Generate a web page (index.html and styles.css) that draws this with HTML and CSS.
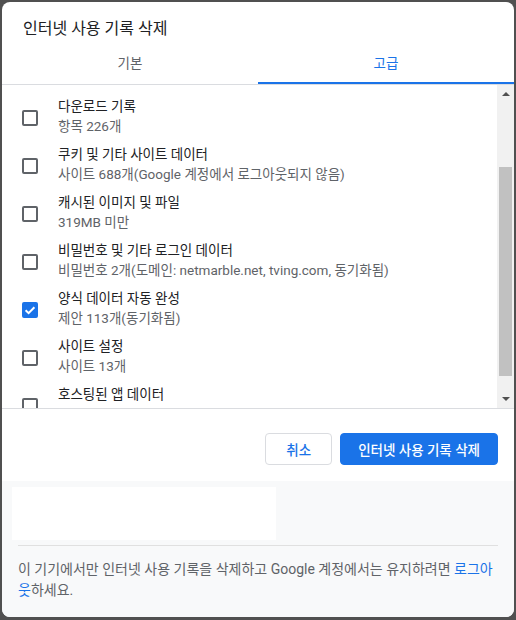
FILE: index.html
```html
<!DOCTYPE html>
<html lang="ko">
<head>
<meta charset="utf-8">
<title>인터넷 사용 기록 삭제</title>
<link rel="stylesheet" href="styles.css">
</head>
<body>
<div class="dialog">
  <div class="dialog-title">인터넷 사용 기록 삭제</div>
  <div class="tabs">
    <div class="tab">기본</div>
    <div class="tab active">고급</div>
  </div>
  <div class="list-wrap">
    <div class="list">
      <div class="row">
        <span class="checkbox"></span>
        <div class="labels"><div class="label">다운로드 기록</div><div class="sub">항목 226개</div></div>
      </div>
      <div class="row">
        <span class="checkbox"></span>
        <div class="labels"><div class="label">쿠키 및 기타 사이트 데이터</div><div class="sub">사이트 688개(Google 계정에서 로그아웃되지 않음)</div></div>
      </div>
      <div class="row">
        <span class="checkbox"></span>
        <div class="labels"><div class="label">캐시된 이미지 및 파일</div><div class="sub">319MB 미만</div></div>
      </div>
      <div class="row">
        <span class="checkbox"></span>
        <div class="labels"><div class="label">비밀번호 및 기타 로그인 데이터</div><div class="sub">비밀번호 2개(도메인: netmarble.net, tving.com, 동기화됨)</div></div>
      </div>
      <div class="row">
        <span class="checkbox checked"><svg viewBox="0 0 16 16" width="16" height="16"><path d="M3.6 8.3l3 2.9 5.8-6" fill="none" stroke="#fff" stroke-width="2"/></svg></span>
        <div class="labels"><div class="label">양식 데이터 자동 완성</div><div class="sub">제안 113개(동기화됨)</div></div>
      </div>
      <div class="row">
        <span class="checkbox"></span>
        <div class="labels"><div class="label">사이트 설정</div><div class="sub">사이트 13개</div></div>
      </div>
      <div class="row">
        <span class="checkbox"></span>
        <div class="labels"><div class="label">호스팅된 앱 데이터</div></div>
      </div>
    </div>
    <div class="scrollbar">
      <div class="sb-btn"><svg width="8" height="5" viewBox="0 0 8 5"><path d="M0 5L4 1L8 5Z" fill="#505050"/></svg></div>
      <div class="sb-track"><div class="sb-thumb"></div></div>
      <div class="sb-btn"><svg width="8" height="5" viewBox="0 0 8 5"><path d="M0 0L4 4L8 0Z" fill="#505050"/></svg></div>
    </div>
  </div>
  <div class="actions">
    <button class="btn cancel">취소</button>
    <button class="btn primary">인터넷 사용 기록 삭제</button>
  </div>
  <div class="footer">
    <div class="account-box"></div>
    <div class="footer-sep"></div>
    <p class="footer-text">이 기기에서만 인터넷 사용 기록을 삭제하고 Google 계정에서는 유지하려면 <a class="link">로그아웃</a>하세요.</p>
  </div>
</div>
</body>
</html>
```

FILE: styles.css
```css
* { box-sizing: border-box; }
html, body { height: 100%; }
body {
  margin: 0;
  background: #505050;
  font-family: Roboto, "Noto Sans CJK KR", sans-serif;
  font-size: 13.5px;
  color: #202124;
  padding: 2px 2px 3px 2px;
}
.dialog {
  width: 512px;
  height: 615px;
  background: #fff;
  border-radius: 8px;
  overflow: hidden;
  display: flex;
  flex-direction: column;
}
.dialog-title {
  padding: 17px 0 0 21px;
  font-size: 16px;
  line-height: 20px;
  color: #202124;
}
.tabs {
  margin-top: 5px;
  display: flex;
  border-bottom: 1px solid #dadce0;
}
.tab {
  flex: 1;
  text-align: center;
  line-height: 38px;
  color: #5f6368;
  border-bottom: 2px solid transparent;
}
.tab.active {
  color: #1a73e8;
  border-bottom-color: #1a73e8;
}
.list-wrap {
  display: flex;
  height: 324px;
  border-bottom: 1px solid #dadce0;
}
.list {
  flex: 1;
  overflow: hidden;
  padding-top: 9px;
}
.row {
  display: flex;
  align-items: flex-start;
  height: 48px;
}
.checkbox {
  flex: none;
  width: 16px;
  height: 16px;
  margin: 16px 20px 0 20px;
  border: 2px solid #5f6368;
  border-radius: 2px;
  display: flex;
}
.checkbox.checked {
  background: #1a73e8;
  border-color: #1a73e8;
}
.checkbox svg { margin: -2px; }
.labels {
  padding-top: 2px;
  line-height: 20px;
}
.label { color: #202124; }
.sub { color: #5f6368; }
.scrollbar {
  width: 17px;
  background: #f1f1f1;
  display: flex;
  flex-direction: column;
}
.sb-btn {
  height: 17px;
  display: flex;
  align-items: center;
  justify-content: center;
}
.sb-track {
  flex: 1;
  padding: 0 2px;
}
.sb-thumb {
  margin-top: 65px;
  height: 209px;
  background: #c1c1c1;
}
.actions {
  display: flex;
  justify-content: flex-end;
  gap: 8px;
  padding: 24px 16px 16px;
  background: #fff;
}
.btn {
  height: 32px;
  border-radius: 4px;
  font-family: Roboto, "Noto Sans CJK KR", sans-serif;
  font-size: 13.5px;
  font-weight: 500;
  padding: 0 17px;
  cursor: pointer;
}
.cancel {
  min-width: 67px;
  background: #fff;
  border: 1px solid #dadce0;
  color: #1a73e8;
}
.primary {
  background: #1a73e8;
  border: 1px solid #1a73e8;
  color: #fff;
}
.footer {
  flex: 1;
  background: #f8f9fa;
  padding-top: 6px;
}
.account-box {
  width: 264px;
  height: 53px;
  margin-left: 10px;
  background: #fff;
}
.footer-sep {
  margin: 5px 16px 0;
  border-top: 1px solid #e0e0e0;
}
.footer-text {
  margin: 0;
  padding: 13px 16px 0;
  font-size: 14px;
  line-height: 21px;
  color: #5f6368;
}
.link { color: #1a73e8; text-decoration: none; }
```
